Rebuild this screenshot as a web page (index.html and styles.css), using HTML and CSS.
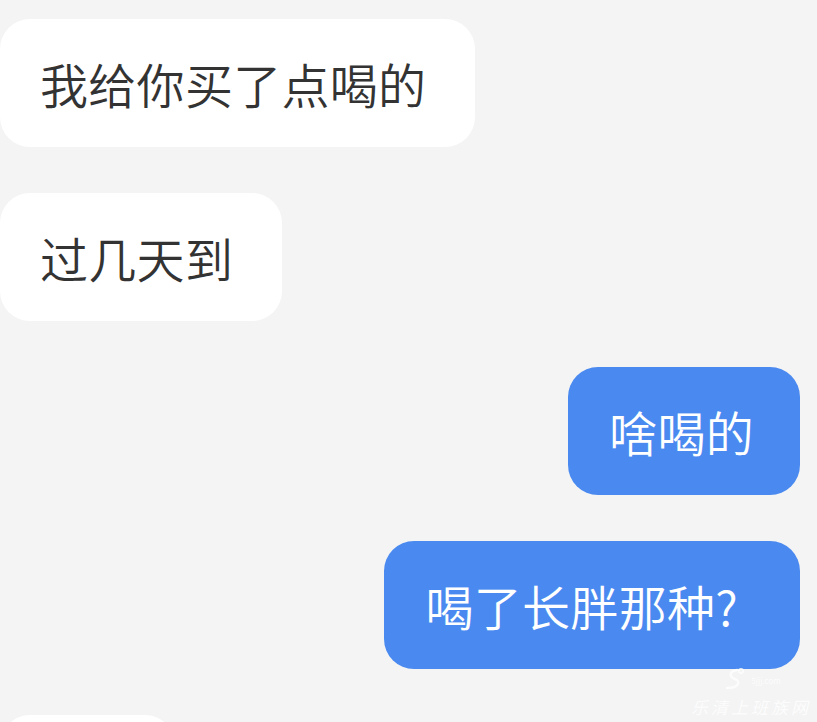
FILE: index.html
```html
<!DOCTYPE html>
<html lang="zh-CN">
<head>
<meta charset="UTF-8" />
<meta name="viewport" content="width=device-width, initial-scale=1" />
<title>聊天记录</title>
<link rel="stylesheet" href="styles.css">
</head>
<body>

<div class="chat">
  <div class="msg left"><div class="bubble">我给你买了点喝的</div></div>
  <div class="msg left"><div class="bubble">过几天到</div></div>
  <div class="msg right"><div class="bubble">啥喝的</div></div>
  <div class="msg right"><div class="bubble q">喝了长胖那种?</div></div>
  <div class="msg left"><div class="bubble stub"></div></div>
</div>

<!-- 水印 -->
<div class="watermark">
  <div class="wm-top">
    <svg class="wm-logo" width="30" height="26" viewBox="0 0 30 26">
      <path d="M16 4 C8 5 8 11 14 13 C20 15 18 22 6 22" fill="none" stroke="#fff" stroke-width="2.4" stroke-linecap="round"/>
      <circle cx="20" cy="5" r="2.2" fill="none" stroke="#fff" stroke-width="1.5"/>
    </svg>
    <span class="wm-small">5jjj.com</span>
  </div>
  <span class="wm-text">乐清上班族网</span>
</div>

</body>
</html>
```

FILE: styles.css
```css
body {
  margin: 0;
  background: #f4f4f4;
  font-family: "Noto Sans CJK SC", "Noto Sans", sans-serif;
  height: 722px;
  overflow: hidden;
  position: relative;
}
/* 聊天列表 */
.chat {
  display: flex;
  flex-direction: column;
  gap: 46px;
  padding: 19px 17px 0 0;
}
.msg {
  display: flex;
}
.msg.left {
  justify-content: flex-start;
}
.msg.right {
  justify-content: flex-end;
}
.bubble {
  font-size: 48px;
  font-weight: 350;
  letter-spacing: 0.3px;
  line-height: 48px;
  height: 128px;
  box-sizing: border-box;
  padding: 40px 49px 40px 40px;
  border-radius: 30px;
  white-space: nowrap;
}
.left .bubble {
  background: #ffffff;
  color: #333333;
}
.right .bubble {
  background: #4a8af0;
  color: #ffffff;
  padding-left: 41px;
  padding-right: 46px;
}
.right .bubble.q {
  padding-right: 62px;
}
.bubble.stub {
  width: 175px;
  padding: 0;
}
/* 水印 */
.watermark {
  position: absolute;
  right: 6px;
  bottom: 3px;
  display: flex;
  flex-direction: column;
  align-items: center;
  opacity: 0.8;
}
.wm-top {
  display: flex;
  align-items: flex-end;
  margin-bottom: 2px;
}
.wm-small {
  font-size: 8px;
  color: #ffffff;
  margin-bottom: 6px;
}
.wm-text {
  font-size: 17px;
  font-style: italic;
  color: #ffffff;
  letter-spacing: 3px;
}
```
